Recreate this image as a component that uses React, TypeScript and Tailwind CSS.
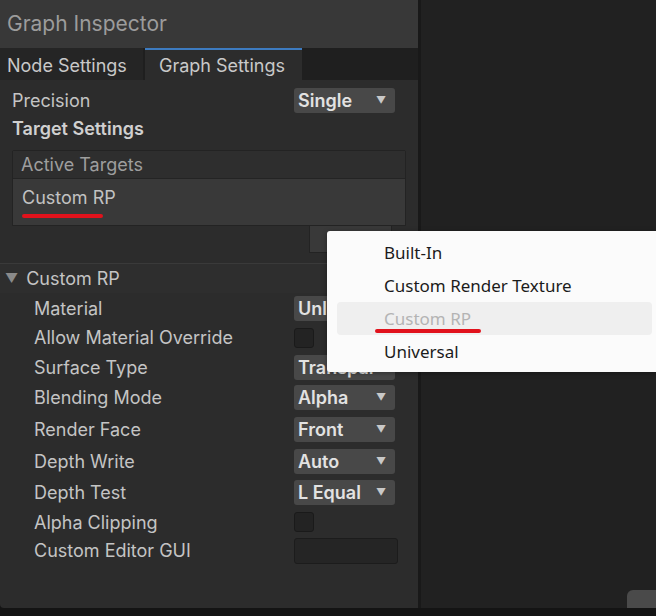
import { useState } from "react";

type Field = {
    label: string;
    kind: "dropdown" | "checkbox" | "text";
    value?: string;
    h: string;
};

// row heights follow the reference spacing
const fields: Field[] = [
    { label: "Material", kind: "dropdown", value: "Unlit", h: "h-[30px]" },
    { label: "Allow Material Override", kind: "checkbox", h: "h-[29px]" },
    { label: "Surface Type", kind: "dropdown", value: "Transparent", h: "h-[30px]" },
    { label: "Blending Mode", kind: "dropdown", value: "Alpha", h: "h-[31px]" },
    { label: "Render Face", kind: "dropdown", value: "Front", h: "h-[32px]" },
    { label: "Depth Write", kind: "dropdown", value: "Auto", h: "h-[32px]" },
    { label: "Depth Test", kind: "dropdown", value: "L Equal", h: "h-[31px]" },
    { label: "Alpha Clipping", kind: "checkbox", h: "h-[28px]" },
    { label: "Custom Editor GUI", kind: "text", h: "h-[29px]" },
];

const targets = ["Built-In", "Custom Render Texture", "Custom RP", "Universal"];

function Dropdown({ value }: { value: string }) {
    return (
        <div className="w-[101px] h-[25px] rounded-[3px] bg-[#484848] flex items-center pl-[4px] pr-[9px] overflow-hidden">
            <span className="flex-1 text-[18px] font-semibold text-[#e2e2e2] whitespace-nowrap overflow-hidden">
                {value}
            </span>
            <span className="text-[10px] text-[#c8c8c8]">▼</span>
        </div>
    );
}

export default function App() {
    const [tab] = useState("graph");

    return (
        <div className="w-[656px] h-[616px] bg-[#141414] flex flex-col overflow-hidden font-['Inter',sans-serif]">
            <div className="flex h-[608px]">
                {/* Inspector panel */}
                <div className="w-[421px] bg-[#2c2c2c] border-r-[3px] border-[#191919] rounded-bl-[4px] flex flex-col">
                    <div className="h-[48px] bg-[#383838] flex items-center pl-[7px] text-[21px] text-[#9c9c9c]">
                        Graph Inspector
                    </div>

                    {/* Tabs */}
                    <div className="h-[32px] bg-[#1f1f1f] flex text-[18px] text-[#c9c9c9]">
                        <div className="w-[143px] bg-[#252525] flex items-center pl-[7px] pt-[3px]">Node Settings</div>
                        <div
                            className={`w-[157px] ml-[2px] flex items-center pl-[14px] pt-[1px] border-t-[2px] border-[#3d7bc0] ${
                                tab === "graph" ? "bg-[#2c2c2c]" : "bg-[#252525]"
                            }`}
                        >
                            Graph Settings
                        </div>
                    </div>

                    {/* Precision */}
                    <div className="flex items-center h-[39px] pl-[12px] pr-[23px] pt-[1px]">
                        <span className="flex-1 text-[18px] text-[#c4c4c4]">Precision</span>
                        <Dropdown value="Single" />
                    </div>
                    <div className="pl-[12px] h-[19px] flex items-center text-[18px] font-semibold text-[#d0d0d0]">
                        Target Settings
                    </div>

                    {/* Active targets list */}
                    <div className="mt-[12px] ml-[12px] mr-[12px] border border-[#232323] rounded-t-[2px]">
                        <div className="h-[28px] bg-[#2e2e2e] flex items-center pl-[8px] text-[18px] text-[#9e9e9e] border-b border-[#242424]">
                            Active Targets
                        </div>
                        <div className="h-[46px] bg-[#393939] pl-[9px] pt-[8px]">
                            <div className="text-[18px] text-[#c2c2c2] leading-[22px]">Custom RP</div>
                            <div className="w-[81px] h-[4px] bg-[#e1121c] rounded-[2px] mt-[5px]"></div>
                        </div>
                    </div>
                    <div className="flex justify-end mr-[26px]">
                        <div className="w-[83px] h-[27px] bg-[#393939] border border-t-0 border-[#232323]"></div>
                    </div>

                    {/* Custom RP section */}
                    <div className="mt-[10px] h-[30px] bg-[#2e2e2e] border-t border-[#3a3a3a] flex items-center pl-[5px] text-[18px] text-[#c4c4c4]">
                        <span className="text-[13px] text-[#8a8a8a] mr-[8px]">▼</span>
                        Custom RP
                    </div>

                    <div className="flex flex-col pl-[34px] pr-[23px]">
                        {fields.map((f) => (
                            <div key={f.label} className={`flex items-center ${f.h}`}>
                                <span className="flex-1 text-[18px] text-[#c4c4c4] whitespace-nowrap">{f.label}</span>
                                {f.kind === "dropdown" && <Dropdown value={f.value || ""} />}
                                {f.kind === "checkbox" && (
                                    <div className="w-[101px]">
                                        <div className="w-[20px] h-[20px] rounded-[3px] bg-[#232323] border border-[#1a1a1a]"></div>
                                    </div>
                                )}
                                {f.kind === "text" && (
                                    <div className="w-[104px] h-[26px] mr-[-3px] rounded-[3px] bg-[#252525] border border-[#1c1c1c]"></div>
                                )}
                            </div>
                        ))}
                    </div>
                </div>

                {/* Right empty area */}
                <div className="flex-1 bg-[#212121] flex flex-col justify-end items-end">
                    <div className="w-[29px] h-[18px] bg-[#4a4a4a] rounded-tl-[6px]"></div>
                </div>
            </div>

            {/* Target popup menu */}
            <div className="absolute left-[327px] top-[231px] w-[329px] h-[141px] bg-[#fbfbfb] shadow-[0_1px_5px_rgba(0,0,0,0.35)] rounded-l-[3px] pt-[5px] pl-[10px] pr-[4px] font-['Noto_Sans',sans-serif]">
                {targets.map((t) => {
                    const active = t === "Custom RP";
                    return (
                        <div
                            key={t}
                            className={`relative h-[33px] flex items-center pl-[47px] text-[17px] rounded-[4px] ${
                                active ? "bg-[#efefef] text-[#b4b4b4]" : "text-[#1b1b1b]"
                            }`}
                        >
                            {t}
                            {active && (
                                <div className="absolute left-[38px] top-[27px] w-[106px] h-[4px] bg-[#e1121c] rounded-[2px]"></div>
                            )}
                        </div>
                    );
                })}
            </div>
        </div>
    );
}
